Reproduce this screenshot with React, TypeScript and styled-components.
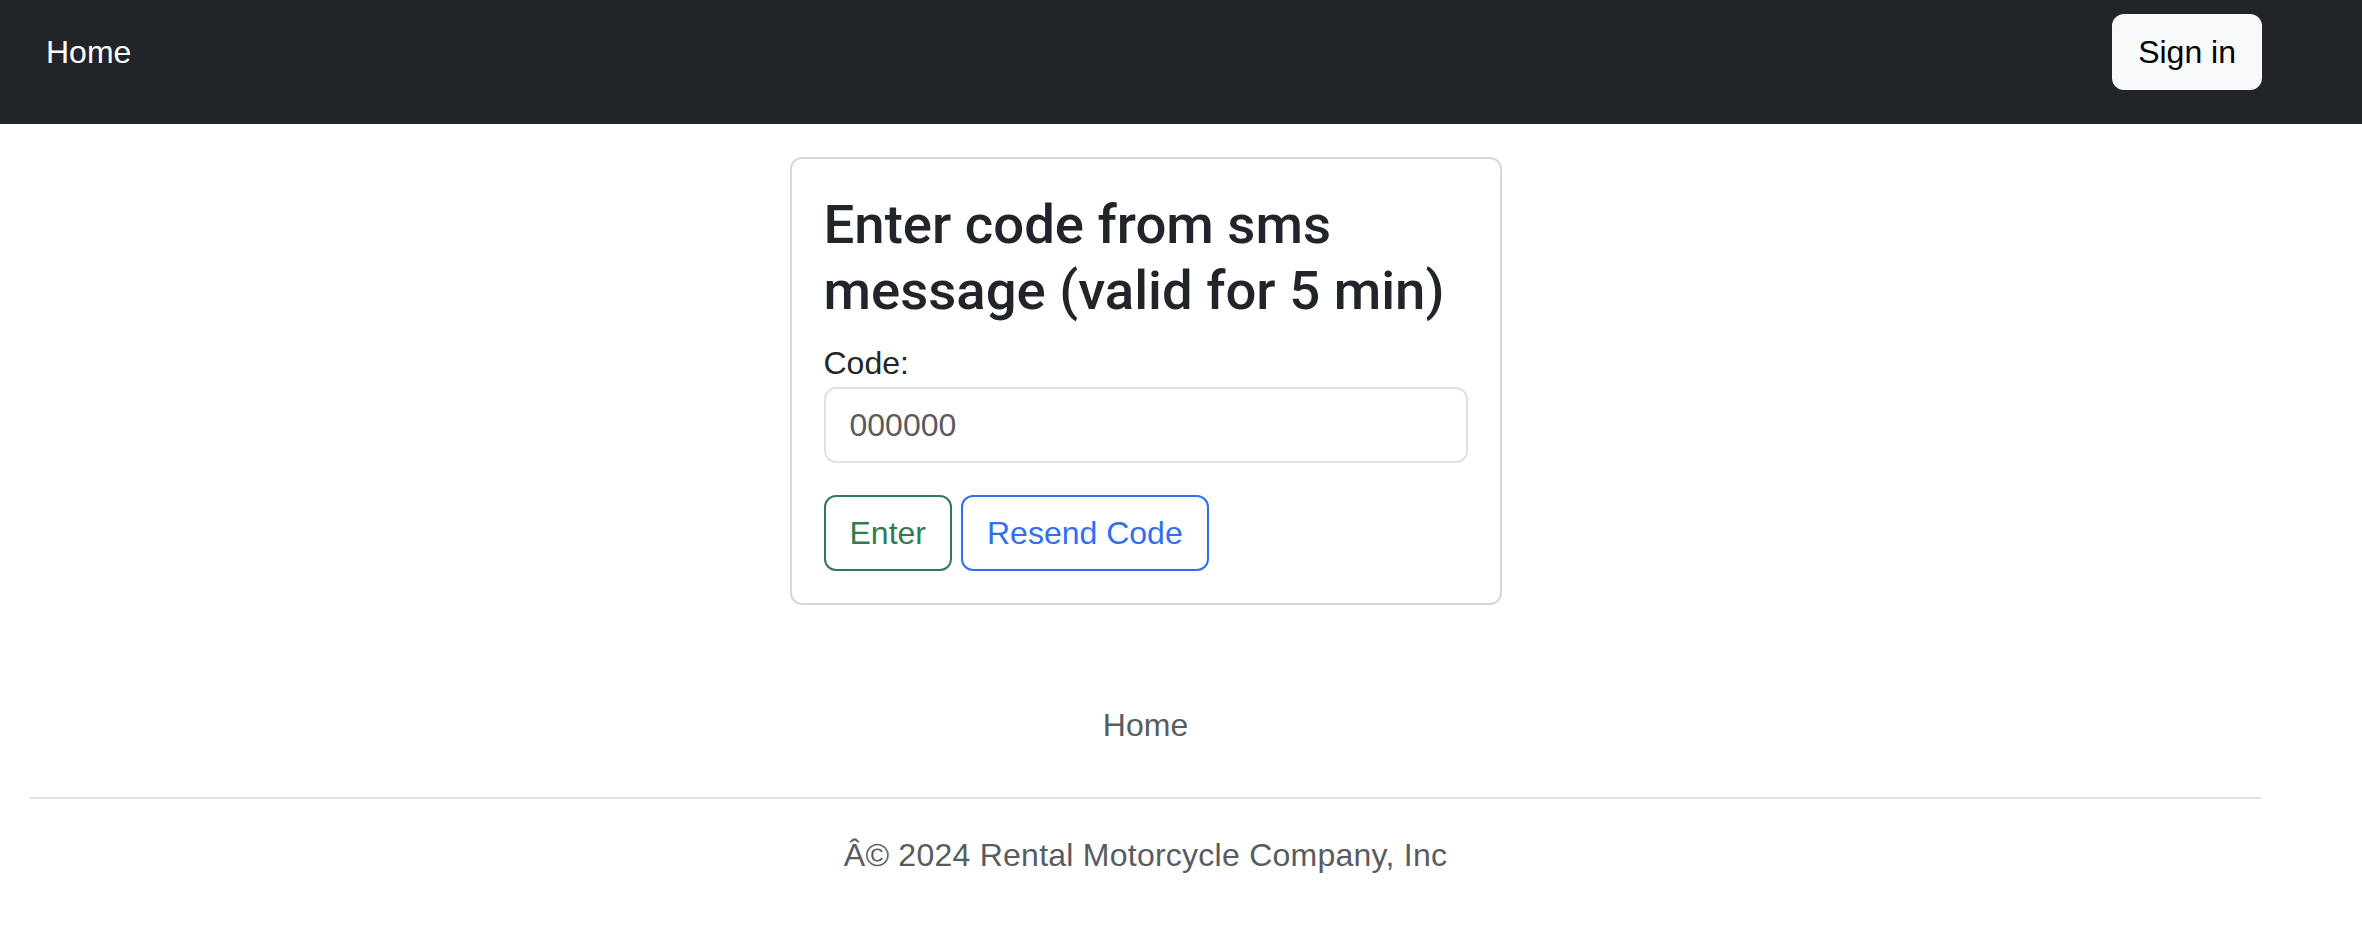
import React from "react";
import styled, { createGlobalStyle } from "styled-components";

const GlobalStyle = createGlobalStyle`
  html, body {
    margin: 0;
    padding: 0;
    background: #ffffff;
  }
  body {
    font-family: "Liberation Sans", Arial, sans-serif;
    font-size: 32px;
    line-height: 48px;
    color: #212529;
  }
  * { box-sizing: border-box; }
`;

const Navbar = styled.nav`
  height: 124px;
  background: #212529;
  padding: 14px 100px 0 46px;
`;

const NavInner = styled.div`
  height: 76px;
  display: flex;
  align-items: center;
  justify-content: space-between;
`;

const Brand = styled.a`
  color: #ffffff;
  font-size: 32px;
  line-height: 48px;
  text-decoration: none;
`;

const LightButton = styled.button`
  height: 76px;
  padding: 12px 24px;
  border: 2px solid #f8f9fa;
  border-radius: 12px;
  background: #f8f9fa;
  color: #000000;
  font-family: inherit;
  font-size: 32px;
  line-height: 48px;
`;

const Container = styled.div`
  padding: 0 101px 0 30px;
`;

const Main = styled.main`
  padding-top: 33px;
  display: flex;
  justify-content: center;
`;

const Card = styled.section`
  width: 712px;
  border: 2px solid #d6d7d8;
  border-radius: 12px;
  padding: 32px;
`;

const Title = styled.h3`
  margin: 0 0 16px;
  font-family: Roboto, "Liberation Sans", Arial, sans-serif;
  font-size: 54.5px;
  line-height: 66px;
  font-weight: 500;
  color: #212529;
`;

const Label = styled.label`
  display: block;
  font-size: 32px;
  line-height: 48px;
`;

const Input = styled.input`
  display: block;
  width: 100%;
  height: 76px;
  padding: 12px 24px;
  border: 2px solid #dee2e6;
  border-radius: 12px;
  font-family: inherit;
  font-size: 32px;
  line-height: 48px;
  color: #212529;
  outline: none;
  &::placeholder {
    color: #595c5f;
  }
`;

const Actions = styled.div`
  margin-top: 32px;
  display: flex;
  gap: 9px;
`;

const OutlineButton = styled.button<{ $tone: string }>`
  height: 76px;
  padding: 12px 24px;
  border: 2px solid ${(p) => p.$tone};
  border-radius: 12px;
  background: transparent;
  color: ${(p) => p.$tone};
  font-family: inherit;
  font-size: 32px;
  line-height: 48px;
`;

const Footer = styled.footer`
  margin-top: 48px;
  padding-top: 32px;
`;

const FooterNav = styled.ul`
  list-style: none;
  margin: 0 0 32px;
  padding: 0 0 32px;
  display: flex;
  justify-content: center;
  border-bottom: 2px solid #dee2e6;
`;

const FooterLink = styled.a`
  display: block;
  padding: 16px 32px;
  color: #595c5f;
  text-decoration: none;
  font-size: 32px;
  line-height: 48px;
`;

const Copyright = styled.p`
  margin: 0;
  text-align: center;
  color: #595c5f;
  font-size: 32px;
  line-height: 48px;
  letter-spacing: 0.25px;
`;

export default function App() {
  return (
    <>
      <GlobalStyle />
      <Navbar>
        <NavInner>
          <Brand href="#">Home</Brand>
          <LightButton type="button">Sign in</LightButton>
        </NavInner>
      </Navbar>
      <Container>
        <Main>
          <Card>
            <Title>Enter code from sms message (valid for 5 min)</Title>
            <Label htmlFor="code">Code:</Label>
            <Input id="code" type="text" placeholder="000000" />
            <Actions>
              <OutlineButton type="button" $tone="#2f7d4f">
                Enter
              </OutlineButton>
              <OutlineButton type="button" $tone="#2f6ff0">
                Resend Code
              </OutlineButton>
            </Actions>
          </Card>
        </Main>
        <Footer>
          <FooterNav>
            <li>
              <FooterLink href="#">Home</FooterLink>
            </li>
          </FooterNav>
          <Copyright>Â© 2024 Rental Motorcycle Company, Inc</Copyright>
        </Footer>
      </Container>
    </>
  );
}
